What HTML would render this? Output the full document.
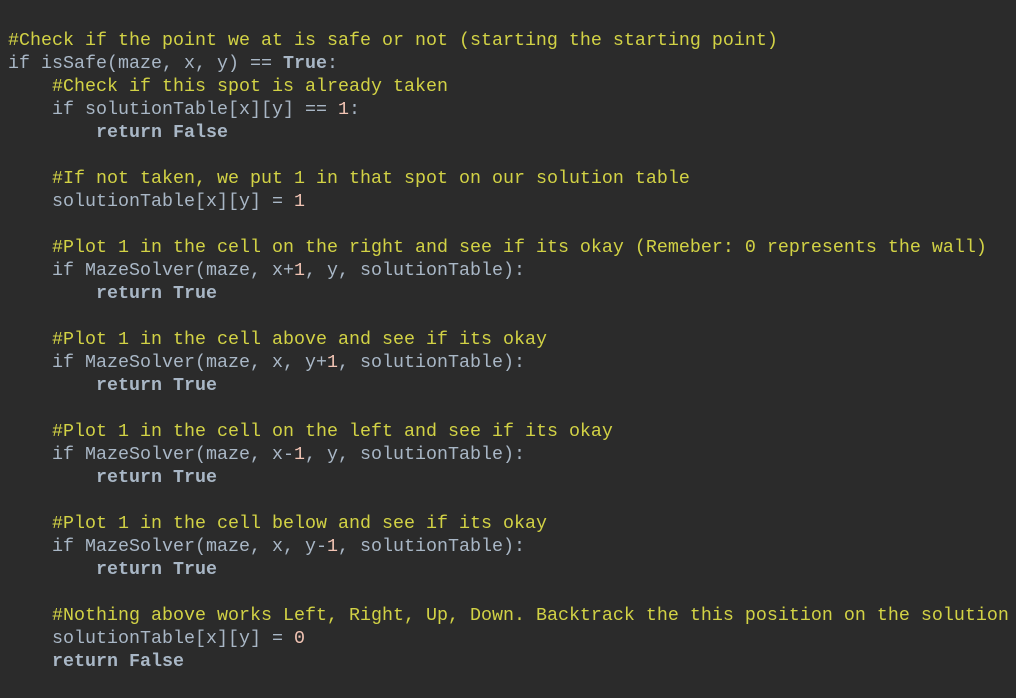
<!DOCTYPE html>
<html><head><style>
html,body{margin:0;padding:0;background:#2b2b2b;width:1016px;height:698px;overflow:hidden}
pre{margin:0;padding:29px 0 0 8px;font-family:"Liberation Mono",monospace;font-size:18.33px;line-height:23px;color:#a9b7c6;white-space:pre}
.c{color:#d2d245}
.k{font-weight:bold;color:#a9b7c6}
.n{color:#f2c4b4}
</style></head><body><pre><span class="c">#Check if the point we at is safe or not (starting the starting point)</span>
if isSafe(maze, x, y) == <span class="k">True</span>:
    <span class="c">#Check if this spot is already taken</span>
    if solutionTable[x][y] == <span class="n">1</span>:
        <span class="k">return False</span>

    <span class="c">#If not taken, we put 1 in that spot on our solution table</span>
    solutionTable[x][y] = <span class="n">1</span>

    <span class="c">#Plot 1 in the cell on the right and see if its okay (Remeber: 0 represents the wall)</span>
    if MazeSolver(maze, x+<span class="n">1</span>, y, solutionTable):
        <span class="k">return True</span>

    <span class="c">#Plot 1 in the cell above and see if its okay</span>
    if MazeSolver(maze, x, y+<span class="n">1</span>, solutionTable):
        <span class="k">return True</span>

    <span class="c">#Plot 1 in the cell on the left and see if its okay</span>
    if MazeSolver(maze, x-<span class="n">1</span>, y, solutionTable):
        <span class="k">return True</span>

    <span class="c">#Plot 1 in the cell below and see if its okay</span>
    if MazeSolver(maze, x, y-<span class="n">1</span>, solutionTable):
        <span class="k">return True</span>

    <span class="c">#Nothing above works Left, Right, Up, Down. Backtrack the this position on the solution</span>
    solutionTable[x][y] = <span class="n">0</span>
    <span class="k">return False</span></pre></body></html>
